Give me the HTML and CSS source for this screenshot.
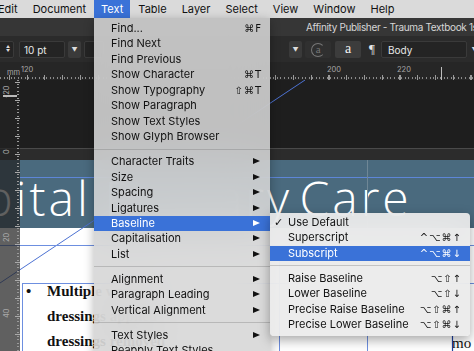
FILE: index.html
```html
<!DOCTYPE html>
<html lang="en">
<head>
    <meta charset="UTF-8">
    <title>Affinity Publisher - Text menu</title>
    <link rel="stylesheet" href="styles.css">
</head>
<body>
    <div class="menubar">
        <span class="mb-item mb-first">Edit</span>
        <span class="mb-item">Document</span>
        <span class="mb-item open">Text</span>
        <span class="mb-item">Table</span>
        <span class="mb-item">Layer</span>
        <span class="mb-item">Select</span>
        <span class="mb-item">View</span>
        <span class="mb-item">Window</span>
        <span class="mb-item">Help</span>
    </div>

    <div class="app">
        <div class="titlebar">Affinity Publisher - Trauma Textbook 1st Edition</div>

        <div class="toolbar">
            <div class="tb-left">
                <div class="field stub"><span class="stepper">&#9650;<br>&#9660;</span></div>
                <div class="field size">10 pt</div>
                <div class="drop">&#9660;</div>
                <div class="field stub2"></div>
            </div>
            <div class="tb-right">
                <div class="drop">&#9660;</div>
                <div class="btn dim"><span class="circ">a</span></div>
                <div class="btn serif">a</div>
                <span class="pilcrow">&para;</span>
                <div class="field style">Body</div>
                <div class="drop last">&#9660;</div>
            </div>
        </div>

        <div class="workspace">
            <div class="hruler">
                <span class="unit">mm</span>
                <span class="rl rl-120">120</span>
                <span class="rl rl-200">200</span>
                <span class="rl rl-220">220</span>
                <span class="major"></span>
            </div>
            <div class="pasteboard"></div>
            <div class="page-edge"></div>
            <div class="bleed"></div>
            <div class="page">
                <div class="band">
                    <div class="headline"><span class="hl-left">Hospital</span><span class="hl-right">Primary Care</span></div>
                </div>
                <div class="page-body">
                    <div class="col-left">
                        <p class="bullet"><span class="dot">&bull;</span>Multiple wound</p>
                        <p>dressings applied</p>
                        <p>dressings removed</p>
                    </div>
                    <div class="col-right">
                        <p>mo</p>
                    </div>
                </div>
            </div>

            <svg class="guides" width="474" height="271" viewBox="0 0 474 271">
                <line x1="305" y1="0" x2="0" y2="203" stroke="#4d72d2" stroke-width="1"/>
                <line x1="20" y1="97.5" x2="474" y2="97.5" stroke="#5d86d8" stroke-width="1"/>
                <line x1="367.5" y1="80" x2="367.5" y2="148" stroke="#6f8796" stroke-width="1"/>
                <line x1="0" y1="165.5" x2="474" y2="165.5" stroke="#6d8fe0" stroke-width="1"/>
                <line x1="22" y1="203.5" x2="474" y2="203.5" stroke="#6d8fe0" stroke-width="1"/>
                <line x1="22.5" y1="203" x2="22.5" y2="271" stroke="#6d8fe0" stroke-width="1"/>
                <line x1="279.5" y1="165" x2="279.5" y2="271" stroke="#6d8fe0" stroke-width="1"/>
                <line x1="367.5" y1="165" x2="367.5" y2="271" stroke="#6d8fe0" stroke-width="1"/>
                <line x1="452.5" y1="256" x2="452.5" y2="271" stroke="#1d3f9e" stroke-width="1.2"/>
            </svg>

            <div class="vruler">
                <span class="vl vl-m20">-20</span>
                <span class="marker"></span>
                <span class="vl vl-0">0</span>
                <span class="vl vl-20">20</span>
                <span class="vl vl-40">40</span>
            </div>
        </div>
    </div>

    <div class="menu text-menu">
        <div class="mi"><span>Find...</span><span class="key">&#8984;F</span></div>
        <div class="mi"><span>Find Next</span></div>
        <div class="mi"><span>Find Previous</span></div>
        <div class="mi"><span>Show Character</span><span class="key">&#8984;T</span></div>
        <div class="mi"><span>Show Typography</span><span class="key">&#8679;&#8984;T</span></div>
        <div class="mi"><span>Show Paragraph</span></div>
        <div class="mi"><span>Show Text Styles</span></div>
        <div class="mi"><span>Show Glyph Browser</span></div>
        <div class="sep"></div>
        <div class="mi sub"><span>Character Traits</span></div>
        <div class="mi sub"><span>Size</span></div>
        <div class="mi sub"><span>Spacing</span></div>
        <div class="mi sub"><span>Ligatures</span></div>
        <div class="mi sub active"><span>Baseline</span></div>
        <div class="mi sub"><span>Capitalisation</span></div>
        <div class="mi sub"><span>List</span></div>
        <div class="sep"></div>
        <div class="mi sub"><span>Alignment</span></div>
        <div class="mi sub"><span>Paragraph Leading</span></div>
        <div class="mi sub"><span>Vertical Alignment</span></div>
        <div class="sep"></div>
        <div class="mi sub"><span>Text Styles</span></div>
        <div class="mi"><span>Reapply Text Styles</span></div>
    </div>

    <div class="menu baseline-menu">
        <div class="mi"><span><span class="check">&#10003;</span>Use Default</span></div>
        <div class="mi"><span>Superscript</span><span class="key">^&#8997;&#8984;&#8593;</span></div>
        <div class="mi active"><span>Subscript</span><span class="key">^&#8997;&#8984;&#8595;</span></div>
        <div class="sep"></div>
        <div class="mi"><span>Raise Baseline</span><span class="key">&#8997;&#8679;&#8593;</span></div>
        <div class="mi"><span>Lower Baseline</span><span class="key">&#8997;&#8679;&#8595;</span></div>
        <div class="mi"><span>Precise Raise Baseline</span><span class="key">&#8997;&#8679;&#8984;&#8593;</span></div>
        <div class="mi"><span>Precise Lower Baseline</span><span class="key">&#8997;&#8679;&#8984;&#8595;</span></div>
    </div>
</body>
</html>
```

FILE: styles.css
```css
body {
    margin: 0;
    width: 474px;
    height: 351px;
    overflow: hidden;
    font-family: Inter, "DejaVu Sans", sans-serif;
    background: #1f1f1f;
}

/* top menu bar */
.menubar {
    height: 18px;
    background: #dadada;
    display: flex;
    align-items: center;
    font-size: 11px;
    color: #111;
}
.mb-item {
    height: 18px;
    line-height: 18px;
    padding: 0 7px;
    margin-right: 1px;
}
.mb-first {
    margin-left: -9px;
}
.mb-item.open {
    background: #3a72d8;
    color: #fff;
}

/* application window */
.titlebar {
    height: 18px;
    line-height: 18px;
    background: #363636;
    color: #d6d6d6;
    font-size: 10px;
    letter-spacing: -0.35px;
    padding-left: 306px;
    white-space: nowrap;
    overflow: hidden;
}
.toolbar {
    height: 26px;
    background: #2b2b2b;
    display: flex;
    align-items: center;
    justify-content: space-between;
    color: #e8e8e8;
    font-size: 10px;
    overflow: hidden;
}
.tb-left, .tb-right {
    display: flex;
    align-items: center;
    gap: 3px;
}
.field {
    height: 17px;
    line-height: 17px;
    background: #242424;
    border: 1px solid #3a3a3a;
    border-radius: 2px;
    box-sizing: border-box;
}
.stub {
    width: 17px;
    margin-left: -3px;
}
.stepper {
    display: block;
    font-size: 4px;
    line-height: 4px;
    text-align: right;
    padding: 3px 3px 0 0;
    color: #ddd;
}
.size {
    width: 46px;
    padding-left: 4px;
    margin-left: 2px;
}
.drop {
    width: 13px;
    height: 17px;
    line-height: 17px;
    background: #3a3a3a;
    border-radius: 2px;
    text-align: center;
    font-size: 6px;
    color: #ddd;
}
.stub2 {
    width: 20px;
}
.tb-right {
    margin-right: -5px;
}
.btn {
    width: 26px;
    height: 17px;
    line-height: 16px;
    border-radius: 2px;
    text-align: center;
    font-family: "Liberation Serif", serif;
    font-size: 14px;
}
.btn.dim {
    background: #303030;
    color: #777;
}
.circ {
    display: inline-block;
    width: 12px;
    height: 12px;
    line-height: 11px;
    border: 1px solid #777;
    border-right-color: transparent;
    border-radius: 50%;
    font-size: 11px;
}
.btn.serif {
    background: #3c3c3c;
    color: #f4f4f4;
    margin-left: 1px;
}
.pilcrow {
    font-family: "Liberation Serif", serif;
    font-size: 13px;
    margin: 0 3px 0 5px;
}
.style {
    width: 86px;
    padding-left: 6px;
    font-size: 10px;
}
.drop.last {
    width: 9px;
    background: #2b2b2b;
}

/* canvas */
.workspace {
    position: relative;
    height: 289px;
    overflow: hidden;
}
.hruler {
    position: relative;
    height: 18px;
    background:
        repeating-linear-gradient(90deg, #8a8a8a 0 1px, transparent 1px 3.55px) 0 15px / 100% 2px no-repeat,
        repeating-linear-gradient(90deg, #9a9a9a 0 1px, transparent 1px 17.75px) 9px 13px / 100% 5px no-repeat,
        #262626;
    color: #a8a8a8;
    font-size: 7.5px;
    z-index: 2;
}
.unit, .rl {
    position: absolute;
    top: 3px;
}
.unit { left: 7px; top: 6px; }
.rl-120 { left: 21px; }
.rl-200 { left: 327px; }
.rl-220 { left: 397px; }
.major {
    position: absolute;
    left: 441px;
    top: 5px;
    width: 1px;
    height: 13px;
    background: #bdbdbd;
}
.pasteboard {
    height: 68px;
    background: #1e1e1e;
}
.page-edge {
    height: 1px;
    background: #4a4a4a;
}
.bleed {
    height: 11px;
    background: #2c2c2c;
}
.band {
    height: 68px;
    background: #4a6a7e;
    overflow: hidden;
}
.headline {
    font-family: "Open Sans", Lato, sans-serif;
    font-weight: 300;
    font-size: 48px;
    line-height: 48px;
    color: #fff;
    white-space: nowrap;
    margin-top: 14px;
    letter-spacing: 3px;
}
.hl-left {
    margin-left: -110px;
}
.hl-right {
    margin-left: 14px;
    word-spacing: -8px;
}
.page-body {
    height: 123px;
    background: #fff;
    display: flex;
    font-family: "Liberation Serif", serif;
    font-size: 15px;
    color: #111;
}
.page-body p {
    margin: 0;
    white-space: nowrap;
}
.col-left {
    width: 258px;
    padding: 51px 0 0 47px;
    font-weight: bold;
    line-height: 25px;
}
.bullet {
    position: relative;
}
.dot {
    position: absolute;
    left: -21px;
}
.col-right {
    padding: 107px 0 0 147px;
    line-height: 17px;
}

.guides {
    position: absolute;
    left: 0;
    top: 18px;
}

.vruler {
    position: absolute;
    left: 0;
    top: 18px;
    width: 20px;
    height: 271px;
    background:
        repeating-linear-gradient(180deg, #9a9a9a 0 1px, transparent 1px 3.6px) 17px 0 / 2px 100% no-repeat,
        repeating-linear-gradient(180deg, #aaaaaa 0 1px, transparent 1px 18px) 15px 2px / 5px 100% no-repeat,
        rgba(34, 34, 34, 0.72);
    color: #aaa;
    font-size: 7.5px;
}
.vl {
    position: absolute;
    left: 2px;
    transform: rotate(-90deg);
    transform-origin: left top;
}
.vl-m20 { top: 18px; }
.vl-0 { top: 74px; }
.vl-20 { top: 162px; }
.vl-40 { top: 238px; }
.marker {
    position: absolute;
    left: 3px;
    top: 15px;
    width: 14px;
    height: 2px;
    background: #bbb;
}

/* drop-down menus */
.menu {
    position: absolute;
    z-index: 10;
    font-size: 11px;
    color: #111;
    box-sizing: border-box;
    backdrop-filter: blur(20px);
}
.text-menu {
    left: 94px;
    top: 18px;
    width: 176px;
    height: 340px;
    padding-top: 3px;
    background: rgba(214, 214, 214, 0.88);
    box-shadow: 0 3px 10px rgba(0, 0, 0, 0.3);
}
.baseline-menu {
    left: 270px;
    top: 213px;
    width: 200px;
    height: 123px;
    padding-top: 2px;
    background: rgba(234, 234, 234, 0.92);
    border-radius: 0 4px 4px 4px;
    box-shadow: 0 4px 12px rgba(0, 0, 0, 0.35);
}
.mi {
    height: 15.44px;
    line-height: 15.44px;
    padding: 0 8px 0 17px;
    display: flex;
    justify-content: space-between;
    white-space: nowrap;
}
.baseline-menu .mi {
    padding-left: 18px;
}
.mi.active {
    background: #3a72d8;
    color: #fff;
}
.key {
    font-family: "DejaVu Sans", sans-serif;
    font-size: 10px;
    letter-spacing: 1px;
}
.sub {
    position: relative;
}
.sub::after {
    content: "";
    position: absolute;
    right: 10px;
    top: 4px;
    border-left: 7px solid #111;
    border-top: 3.5px solid transparent;
    border-bottom: 3.5px solid transparent;
}
.sub.active::after {
    border-left-color: #fff;
}
.check {
    position: absolute;
    left: 4px;
    font-family: "DejaVu Sans", sans-serif;
    font-size: 11px;
}
.sep {
    height: 9.7px;
    position: relative;
}
.sep::after {
    content: "";
    position: absolute;
    left: 0;
    right: 0;
    top: 4px;
    height: 1px;
    background: rgba(120, 120, 120, 0.35);
}
```
